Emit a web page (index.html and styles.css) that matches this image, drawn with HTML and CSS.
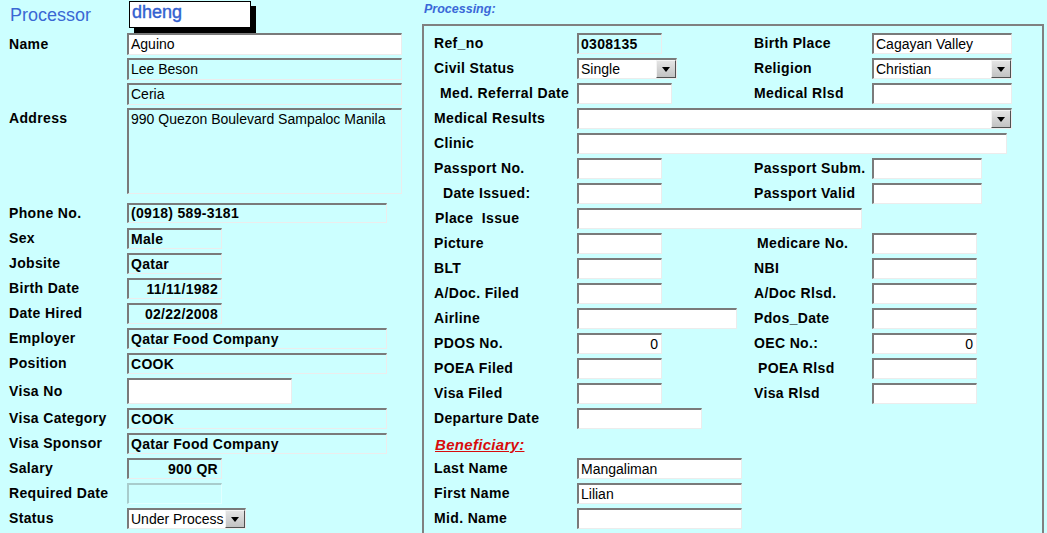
FILE: index.html
```html
<!DOCTYPE html>
<html>
<head>
<meta charset="utf-8">
<link rel="stylesheet" href="styles.css">
</head>
<body>
<div class="page">
  <div class="left">
    <div class="header">
      <div class="proc-label">Processor</div>
      <div class="user-box">dheng</div>
    </div>
    <div class="rows">
      <div class="row h22"><div class="lbl">Name</div><div class="box w275 h22">Aguino</div></div>
      <div class="row h22"><div class="lbl"></div><div class="box w275 h22 cyan">Lee Beson</div></div>
      <div class="row h22"><div class="lbl"></div><div class="box w275 h22 cyan">Ceria</div></div>
      <div class="row tall"><div class="lbl">Address</div><div class="box w275 area cyan">990 Quezon Boulevard Sampaloc Manila</div></div>
      <div class="row"><div class="lbl">Phone No.</div><div class="box w260 h20 cyan bold">(0918) 589-3181</div></div>
      <div class="row"><div class="lbl">Sex</div><div class="box w95 cyan bold">Male</div></div>
      <div class="row"><div class="lbl">Jobsite</div><div class="box w95 cyan bold">Qatar</div></div>
      <div class="row"><div class="lbl">Birth Date</div><div class="box w95 cyan bold ralign">11/11/1982</div></div>
      <div class="row"><div class="lbl">Date Hired</div><div class="box w95 cyan bold ralign">02/22/2008</div></div>
      <div class="row"><div class="lbl">Employer</div><div class="box w260 cyan bold">Qatar Food Company</div></div>
      <div class="row"><div class="lbl">Position</div><div class="box w260 cyan bold">COOK</div></div>
      <div class="row visa"><div class="lbl">Visa No</div><div class="box w165 h26"></div></div>
      <div class="row"><div class="lbl">Visa Category</div><div class="box w260 cyan bold">COOK</div></div>
      <div class="row"><div class="lbl">Visa Sponsor</div><div class="box w260 cyan bold">Qatar Food Company</div></div>
      <div class="row"><div class="lbl">Salary</div><div class="box w95 cyan bold ralign">900 QR</div></div>
      <div class="row"><div class="lbl">Required Date</div><div class="box w95 cyan disabled"></div></div>
      <div class="row"><div class="lbl">Status</div><div class="box w119 select"><span class="val">Under Process</span><span class="btn"><span class="tri"></span></span></div></div>
    </div>
  </div>
  <div class="panel">
    <div class="processing">Processing:</div>
    <div class="frame">
      <div class="grid">
        <div class="lbl">Ref_no</div><div class="cell"><div class="box w85 cyan bold">0308135</div></div>
        <div class="lbl">Birth Place</div><div class="cell"><div class="box w140">Cagayan Valley</div></div>

        <div class="lbl">Civil Status</div><div class="cell"><div class="box w100 select"><span class="val">Single</span><span class="btn"><span class="tri"></span></span></div></div>
        <div class="lbl">Religion</div><div class="cell"><div class="box w140 select"><span class="val">Christian</span><span class="btn"><span class="tri"></span></span></div></div>

        <div class="lbl ind6">Med. Referral Date</div><div class="cell"><div class="box w95"></div></div>
        <div class="lbl">Medical Rlsd</div><div class="cell"><div class="box w140"></div></div>

        <div class="lbl">Medical Results</div><div class="cell span3"><div class="box w435 select"><span class="val"></span><span class="btn"><span class="tri"></span></span></div></div>

        <div class="lbl">Clinic</div><div class="cell span3"><div class="box w430"></div></div>

        <div class="lbl">Passport No.</div><div class="cell"><div class="box w85"></div></div>
        <div class="lbl">Passport Subm.</div><div class="cell"><div class="box w110"></div></div>

        <div class="lbl ind9">Date Issued:</div><div class="cell"><div class="box w85"></div></div>
        <div class="lbl">Passport Valid</div><div class="cell"><div class="box w110"></div></div>

        <div class="lbl ind1">Place&nbsp; Issue</div><div class="cell span3"><div class="box w285"></div></div>

        <div class="lbl">Picture</div><div class="cell"><div class="box w85"></div></div>
        <div class="lbl ind3">Medicare No.</div><div class="cell"><div class="box w105"></div></div>

        <div class="lbl">BLT</div><div class="cell"><div class="box w85"></div></div>
        <div class="lbl">NBI</div><div class="cell"><div class="box w105"></div></div>

        <div class="lbl">A/Doc. Filed</div><div class="cell"><div class="box w85"></div></div>
        <div class="lbl">A/Doc Rlsd.</div><div class="cell"><div class="box w105"></div></div>

        <div class="lbl">Airline</div><div class="cell"><div class="box w160"></div></div>
        <div class="lbl">Pdos_Date</div><div class="cell"><div class="box w105"></div></div>

        <div class="lbl">PDOS No.</div><div class="cell"><div class="box w85 ralign">0</div></div>
        <div class="lbl">OEC No.:</div><div class="cell"><div class="box w105 ralign">0</div></div>

        <div class="lbl">POEA Filed</div><div class="cell"><div class="box w85"></div></div>
        <div class="lbl ind4">POEA Rlsd</div><div class="cell"><div class="box w105"></div></div>

        <div class="lbl">Visa Filed</div><div class="cell"><div class="box w85"></div></div>
        <div class="lbl">Visa Rlsd</div><div class="cell"><div class="box w105"></div></div>

        <div class="lbl">Departure Date</div><div class="cell"><div class="box w125"></div></div>
        <div class="lbl"></div><div class="cell"></div>

        <div class="benef span4"><span class="benef-text">Beneficiary:</span></div>

        <div class="lbl">Last Name</div><div class="cell"><div class="box w165">Mangaliman</div></div>
        <div class="lbl"></div><div class="cell"></div>

        <div class="lbl">First Name</div><div class="cell"><div class="box w165">Lilian</div></div>
        <div class="lbl"></div><div class="cell"></div>

        <div class="lbl">Mid. Name</div><div class="cell"><div class="box w165"></div></div>
        <div class="lbl"></div><div class="cell"></div>
      </div>
    </div>
  </div>
</div>
</body>
</html>
```

FILE: styles.css
```css
html, body {
  margin: 0;
  padding: 0;
}
body {
  background: #ccffff;
  font-family: "Liberation Sans", Arial, sans-serif;
  color: #000;
  width: 1047px;
  height: 533px;
  overflow: hidden;
}
.page {
  display: flex;
  align-items: flex-start;
}
.left {
  flex: none;
  width: 422px;
}
.header {
  display: flex;
  align-items: flex-start;
  height: 33px;
  padding-left: 10px;
  box-sizing: border-box;
}
.proc-label {
  width: 119px;
  font-size: 18px;
  line-height: 20px;
  padding-top: 5px;
  color: #3a68d4;
}
.user-box {
  margin-top: 1px;
  width: 122px;
  height: 27px;
  box-sizing: border-box;
  border: 1px solid #000;
  background: #fff;
  box-shadow: 5px 5px 0 #000;
  color: #3360d0;
  font-size: 18px;
  line-height: 20px;
  padding-left: 2px;
  -webkit-text-stroke: 0.4px #3360d0;
}
.rows {
  padding-left: 9px;
}
.row {
  display: flex;
  align-items: flex-start;
  height: 25px;
}
.row.tall { height: 95px; }
.row.visa { height: 30px; }
.lbl {
  flex: none;
  width: 118px;
  font-size: 14px;
  font-weight: bold;
  letter-spacing: 0.35px;
  line-height: 21px;
  white-space: nowrap;
}
.row.h22 .lbl { line-height: 22px; }
.row.visa .lbl { line-height: 26px; }
.box {
  box-sizing: border-box;
  height: 21px;
  border-style: solid;
  border-width: 2px 1px 1px 2px;
  border-color: #7a7a7a #ececec #ececec #7a7a7a;
  background: #fff;
  padding: 0 2px;
  font-size: 14px;
  line-height: 18px;
  white-space: nowrap;
  overflow: hidden;
}
.box.h22 { height: 22px; line-height: 19px; }
.box.h20 { height: 20px; line-height: 17px; }
.box.h26 { height: 26px; }
.box.area { height: 86px; }
.box.cyan { background: transparent; }
.box.bold {
  font-size: 14px;
  font-weight: bold;
  letter-spacing: 0.3px;
}
.box.ralign { text-align: right; padding-right: 3px; }
.box.disabled { border-color: #a8cccc #e2ffff #e2ffff #a8cccc; }
.box.select {
  display: flex;
  align-items: center;
  padding-right: 0;
}
.val { flex: 1; overflow: hidden; }
.btn {
  flex: none;
  width: 20px;
  height: 18px;
  box-sizing: border-box;
  background: linear-gradient(#e4e4e4, #c2c2c2);
  border-style: solid;
  border-width: 1px;
  border-color: #f4f4f4 #505050 #505050 #f4f4f4;
  display: flex;
  align-items: center;
  justify-content: center;
}
.tri {
  width: 0;
  height: 0;
  border-left: 4px solid transparent;
  border-right: 4px solid transparent;
  border-top: 5px solid #000;
}
.w85 { width: 85px; }
.w95 { width: 95px; }
.w100 { width: 100px; }
.w105 { width: 105px; }
.w110 { width: 110px; }
.w119 { width: 119px; }
.w125 { width: 125px; }
.w140 { width: 140px; }
.w160 { width: 160px; }
.w165 { width: 165px; }
.w260 { width: 260px; }
.w275 { width: 275px; }
.w285 { width: 285px; }
.w430 { width: 430px; }
.w435 { width: 435px; }

.panel {
  flex: none;
  width: 625px;
}
.processing {
  height: 24px;
  box-sizing: border-box;
  padding: 2px 0 0 2px;
  font-size: 12.5px;
  line-height: 14px;
  font-weight: bold;
  font-style: italic;
  color: #3a68d8;
}
.frame {
  width: 622px;
  height: 530px;
  box-sizing: border-box;
  border: 2px solid #808080;
  border-bottom: none;
  padding: 7px 0 0 10px;
}
.grid {
  display: grid;
  grid-template-columns: 143px 177px 118px 1fr;
  grid-auto-rows: 25px;
}
.grid .lbl { width: auto; }
.cell { display: flex; }
.span3 { grid-column: span 3; }
.span4 { grid-column: span 4; }
.ind1 { padding-left: 1px; }
.ind3 { padding-left: 3px; }
.ind4 { padding-left: 4px; }
.ind6 { padding-left: 6px; }
.ind9 { padding-left: 9px; }
.benef {
  padding: 3px 0 0 1px;
}
.benef-text {
  color: #d80c0c;
  font-size: 15px;
  line-height: 16px;
  font-weight: bold;
  font-style: italic;
  text-decoration: underline;
  letter-spacing: 0.3px;
}
```
